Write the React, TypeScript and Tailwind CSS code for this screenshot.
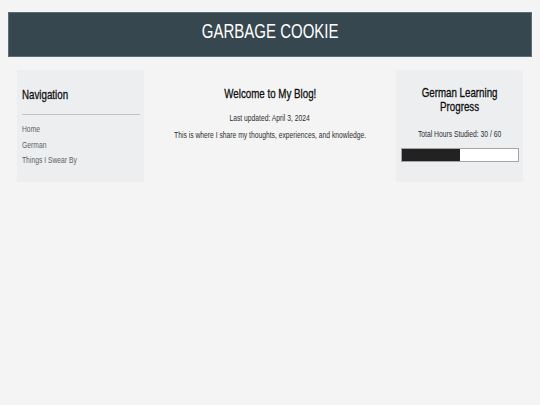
import React from "react";

const font = "font-['Liberation_Sans',Arial,sans-serif]";

function Narrow({ children, left = false }: { children: React.ReactNode; left?: boolean }) {
  return (
    <span className={`inline-block whitespace-nowrap scale-x-75 ${left ? "origin-left" : "origin-center"}`}>
      {children}
    </span>
  );
}

const heading = "text-[13px] font-normal text-[#0d0d0d] [-webkit-text-stroke:0.3px_#0d0d0d]";

export default function App() {
  const hours = 30;
  const goal = 60;
  return (
    <div className={`min-h-[405px] w-full bg-[#f4f4f4] pt-[12px] ${font}`}>
      <header className="mx-[8px] h-[45px] border border-[#5d6d77] bg-[#37474f] pt-[7px] text-center">
        <h1 className="text-[20px] leading-[23px] font-normal text-white">
          <Narrow>GARBAGE COOKIE</Narrow>
        </h1>
      </header>

      <main className="mt-[13px] flex items-start px-[17px]">
        <aside className="h-[112px] w-[127px] shrink-0 bg-[#eceef0] px-[4.5px] pt-[17px]">
          <h2 className={`border-b border-[#c2c4c6] pb-[11.5px] leading-[15px] ${heading}`}>
            <Narrow left>Navigation</Narrow>
          </h2>
          <ul className="mt-[7.5px] text-[9px] leading-[15.5px] text-[#5c5f63]">
            <li>
              <Narrow left>Home</Narrow>
            </li>
            <li>
              <Narrow left>German</Narrow>
            </li>
            <li>
              <Narrow left>Things I Swear By</Narrow>
            </li>
          </ul>
        </aside>

        <section className="min-w-0 flex-1 pt-[16.3px]">
          <h2 className={`flex justify-center leading-[15px] ${heading}`}>
            <Narrow>Welcome to My Blog!</Narrow>
          </h2>
          <p className="mt-[12.1px] flex justify-center text-[9px] leading-[10.35px] text-[#2e2e2e]">
            <Narrow>Last updated: April 3, 2024</Narrow>
          </p>
          <p className="mt-[6.25px] flex justify-center text-[9px] leading-[10.35px] text-[#2e2e2e]">
            <Narrow>This is where I share my thoughts, experiences, and knowledge.</Narrow>
          </p>
        </section>

        <aside className="h-[112px] w-[127px] shrink-0 bg-[#eceef0] px-[4.5px] pt-[15.5px] text-center">
          <h2 className={`flex justify-center leading-[14.5px] ${heading}`}>
            <Narrow>
              German Learning
              <br />
              Progress
            </Narrow>
          </h2>
          <p className="mt-[14.2px] flex justify-center text-[9px] leading-[10.35px] text-[#2e2e2e]">
            <Narrow>
              Total Hours Studied: {hours} / {goal}
            </Narrow>
          </p>
          <div className="mt-[9.3px] h-[13.4px] w-full border border-[#a3a5a8] bg-white">
            <div className="h-full bg-[#222]" style={{ width: `${(hours / goal) * 100}%` }} />
          </div>
        </aside>
      </main>
    </div>
  );
}
